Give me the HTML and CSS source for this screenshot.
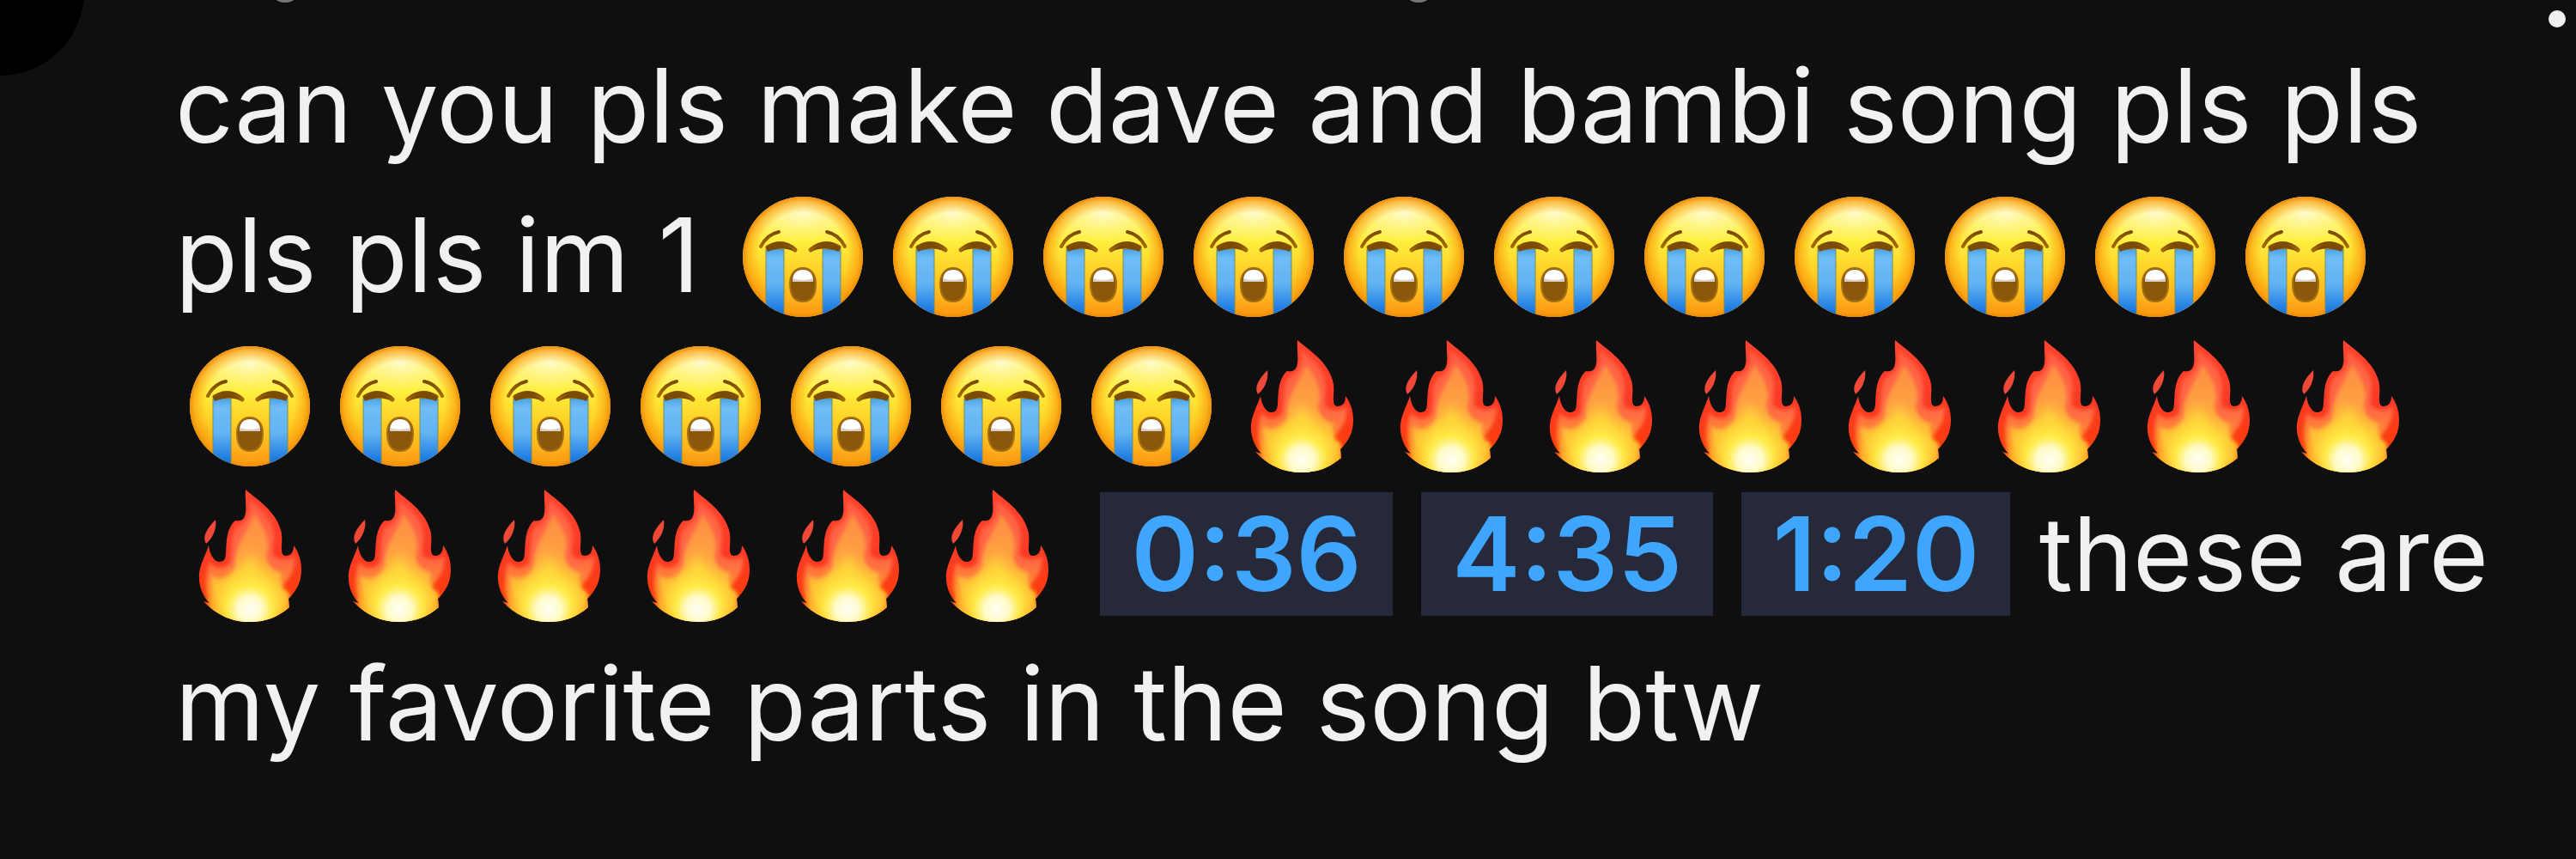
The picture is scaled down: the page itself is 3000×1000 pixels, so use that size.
FILE: index.html
```html
<!DOCTYPE html>
<html lang="en">
<head>
<meta charset="utf-8">
<meta name="viewport" content="width=device-width, initial-scale=1">
<title>Comment</title>
<link rel="stylesheet" href="styles.css">
</head>
<body>
<svg class="defs" aria-hidden="true">
  <defs>
    <linearGradient id="skin" x1="0" y1="0" x2="0" y2="1">
      <stop offset="0" stop-color="#fff9c0"/><stop offset=".1" stop-color="#fff79a"/><stop offset=".38" stop-color="#ffee3c"/><stop offset=".68" stop-color="#ffc921"/><stop offset="1" stop-color="#ff9d18"/>
    </linearGradient>
    <radialGradient id="rim" cx=".5" cy=".5" r=".5">
      <stop offset=".74" stop-color="#f79a0c" stop-opacity="0"/><stop offset=".92" stop-color="#f99b0e" stop-opacity=".65"/><stop offset="1" stop-color="#ee8d08"/>
    </radialGradient>
    <radialGradient id="shine" cx=".5" cy=".3" r=".6">
      <stop offset="0" stop-color="#fffbd0" stop-opacity=".9"/><stop offset="1" stop-color="#fff36a" stop-opacity="0"/>
    </radialGradient>
    <linearGradient id="tear" x1="0" y1="0" x2="0" y2="1">
      <stop offset="0" stop-color="#4ba4e6"/><stop offset=".12" stop-color="#70bdf5"/><stop offset=".45" stop-color="#62b3f3"/><stop offset=".85" stop-color="#0f6fdc"/>
    </linearGradient>
    <linearGradient id="brow" x1="0" y1="0" x2="0" y2="1">
      <stop offset="0" stop-color="#7b4a05"/><stop offset="1" stop-color="#a36a08"/>
    </linearGradient>
    <linearGradient id="flame" x1="0" y1="0" x2="0" y2="1">
      <stop offset="0" stop-color="#ff4530"/><stop offset=".5" stop-color="#fb3a24"/><stop offset=".78" stop-color="#fb3d0c"/><stop offset="1" stop-color="#ff8a1c"/>
    </linearGradient>
    <linearGradient id="ember" x1="0" y1="0" x2="0" y2="1">
      <stop offset="0" stop-color="#ff5f45"/><stop offset=".5" stop-color="#ff6a45"/><stop offset=".78" stop-color="#ff9a2c"/><stop offset="1" stop-color="#ffa01c"/>
    </linearGradient>
    <linearGradient id="tongue" x1="0" y1="0" x2="0" y2="1">
      <stop offset="0" stop-color="#ff8c42"/><stop offset=".35" stop-color="#ff9f42"/><stop offset=".7" stop-color="#ffc038"/><stop offset="1" stop-color="#ffa826"/>
    </linearGradient>
    <radialGradient id="core" cx="83" cy="154" r="52" gradientUnits="userSpaceOnUse">
      <stop offset="0" stop-color="#fffef4"/><stop offset=".28" stop-color="#fffbc8"/><stop offset=".52" stop-color="#ffee4a" stop-opacity=".85"/><stop offset="1" stop-color="#ffcd28" stop-opacity="0"/>
    </radialGradient>
    <filter id="soft" x="-20%" y="-20%" width="140%" height="140%"><feGaussianBlur stdDeviation="2"/></filter>
    <filter id="softer" x="-40%" y="-40%" width="180%" height="180%"><feGaussianBlur stdDeviation="7"/></filter>
    <clipPath id="face"><circle cx="82" cy="79" r="70"/></clipPath>
    <clipPath id="fireshape"><path d="M78 15C92 27 113 40 119 62C123 75 116 90 124 92C131 92 134 88 134 80C141 89 145 103 142 118C140 128 134 136 128 142L129 152C116 163 102 169 83 169C62 169 44 161 29 145L36 147C27 138 23 125 24 113C25 102 31 92 35 80C37 95 45 103 53 97C58 92 51 64 66 51C70 52 75 51 77 46C80 38 77 27 78 15Z"/></clipPath>
    <symbol id="sob" viewBox="-5 -10 175 174">
      <circle cx="82" cy="79" r="70" fill="url(#skin)"/>
      <ellipse cx="82" cy="40" rx="48" ry="30" fill="url(#shine)"/>
      <circle cx="82" cy="79" r="70" fill="url(#rim)"/>
      <g clip-path="url(#face)">
        <path d="M39 70H60V160H39ZM105 70H126V160H105Z" fill="url(#tear)" stroke="#728d65" stroke-width="1"/>
      </g>
      <g fill="none" stroke="url(#brow)" stroke-linecap="round" stroke-linejoin="round">
        <path d="M33 67Q40 53 54 50M131 67Q124 53 110 50" stroke-width="4"/>
        <path d="M41 68Q58 58 73 71M91 71Q107 58 124 68" stroke-width="5"/>
      </g>
      <path d="M39 68Q58 59 73 73Q58 66 41 73ZM126 68Q106 59 91 73Q106 66 124 73Z" fill="#7b4a05"/>
      <path d="M82 92C91 92 97 99 97 110C97 124 92 131 82 131C72 131 67 124 67 110C67 99 73 92 82 92Z" fill="#8b580b" stroke="#a47012" stroke-width="2"/>
      <path d="M70 107C70 98 75 94 82 94C89 94 94 98 94 107Q82 109 70 107Z" fill="#fff"/>
      <path d="M70 104Q82 108 94 104L94 108H70Z" fill="#d7d0c9"/>
    </symbol>
    <symbol id="fire" viewBox="-4 3 174 174">
      <path d="M43 50C45 61 39 72 32 78C27 70 33 60 43 50Z" fill="#ee4937"/>
      <g clip-path="url(#fireshape)">
        <path d="M0 0H164V180H0Z" fill="url(#flame)"/>
        <path filter="url(#soft)" d="M82 27C99 40 111 51 111 71C110 86 107 93 116 95C125 97 130 96 135 92C137 104 132 116 119 129L129 138V170H40L34 138C30 123 34 105 36 99C42 109 56 108 60 99C63 83 60 68 68 58C78 54 84 45 82 27Z" fill="url(#ember)"/>
        <path filter="url(#soft)" d="M88 43C101 60 107 76 102 91C103 105 112 110 120 112C117 124 119 135 127 134L125 152L100 166H60C45 152 38 135 38 115C51 124 64 116 66 103C65 80 79 66 88 43Z" fill="url(#tongue)"/>
        <path filter="url(#softer)" d="M83 88C90 108 116 126 113 146L90 166H76L52 148C48 128 76 110 83 88Z" fill="#ffe13c" opacity=".85"/>
        <path d="M0 0H164V180H0Z" fill="url(#core)"/>
      </g>
    </symbol>
  </defs>
</svg>
<main class="page">
  <article class="comment">
    <div class="avatar"></div>
    <div class="header"><span class="tail tail-first"></span><span class="tail tail-second"></span></div>
    <button class="menu" type="button" aria-label="More actions"><span class="menu-dot"></span></button>
    <p class="text">can you pls make dave and bambi song pls pls pls pls im 1 <svg class="emoji sob"><use href="#sob"/></svg><svg class="emoji sob"><use href="#sob"/></svg><svg class="emoji sob"><use href="#sob"/></svg><svg class="emoji sob"><use href="#sob"/></svg><svg class="emoji sob"><use href="#sob"/></svg><svg class="emoji sob"><use href="#sob"/></svg><svg class="emoji sob"><use href="#sob"/></svg><svg class="emoji sob"><use href="#sob"/></svg><svg class="emoji sob"><use href="#sob"/></svg><svg class="emoji sob"><use href="#sob"/></svg><svg class="emoji sob"><use href="#sob"/></svg><svg class="emoji sob"><use href="#sob"/></svg><svg class="emoji sob"><use href="#sob"/></svg><svg class="emoji sob"><use href="#sob"/></svg><svg class="emoji sob"><use href="#sob"/></svg><svg class="emoji sob"><use href="#sob"/></svg><svg class="emoji sob"><use href="#sob"/></svg><svg class="emoji sob"><use href="#sob"/></svg><svg class="emoji fire"><use href="#fire"/></svg><svg class="emoji fire"><use href="#fire"/></svg><svg class="emoji fire"><use href="#fire"/></svg><svg class="emoji fire"><use href="#fire"/></svg><svg class="emoji fire"><use href="#fire"/></svg><svg class="emoji fire"><use href="#fire"/></svg><svg class="emoji fire"><use href="#fire"/></svg><svg class="emoji fire"><use href="#fire"/></svg><svg class="emoji fire"><use href="#fire"/></svg><svg class="emoji fire"><use href="#fire"/></svg><svg class="emoji fire"><use href="#fire"/></svg><svg class="emoji fire"><use href="#fire"/></svg><svg class="emoji fire"><use href="#fire"/></svg><svg class="emoji fire"><use href="#fire"/></svg> <a class="stamp" href="#t=36">0:36</a> <a class="stamp" href="#t=275">4:35</a> <a class="stamp" href="#t=80">1:20</a> these are my favorite parts in the song btw</p>
  </article>
</main>
</body>
</html>
```
FILE: styles.css
```css
* { box-sizing: border-box; }

body {
  margin: 0;
  background: #0f0f0f;
  color: #f1f1f1;
  font-family: Inter, "Liberation Sans", sans-serif;
}

.defs { position: absolute; width: 0; height: 0; }

.page { min-height: 100vh; overflow: hidden; }

.comment { position: relative; padding: 36px 60px 0 204px; }

.avatar {
  position: absolute;
  top: -108px;
  left: -98px;
  width: 196px;
  height: 196px;
  border-radius: 50%;
  background: #000;
}

.header { position: absolute; top: 0; left: 0; }

.tail {
  position: absolute;
  top: -5px;
  width: 20px;
  height: 8px;
  border-radius: 50%;
  background: #777;
}
.tail-first { left: 322px; }
.tail-second { left: 1642px; }

.menu {
  position: absolute;
  top: 0;
  right: 8px;
  padding: 12px 4px;
  border: 0;
  background: none;
}
.menu-dot {
  display: block;
  width: 20px;
  height: 20px;
  border-radius: 50%;
  background: #f1f1f1;
}

.text {
  margin: 0;
  font-size: 119px;
  line-height: 174px;
}

.emoji { height: 174px; vertical-align: top; }
.sob { width: 175px; }
.fire { width: 174px; }

.stamp {
  padding: 0 36px;
  background: #25293a;
  color: #3ea6ff;
  font-weight: 600;
  text-decoration: none;
}
```
